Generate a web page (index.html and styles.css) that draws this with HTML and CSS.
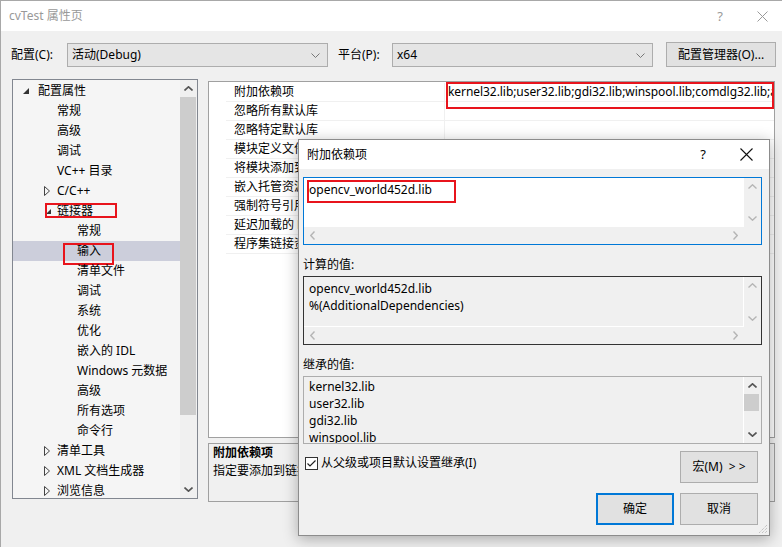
FILE: index.html
```html
<!DOCTYPE html>
<html lang="zh-CN">

<head>
    <meta charset="UTF-8">
    <meta name="viewport" content="width=device-width, initial-scale=1.0">
    <title>cvTest 属性页</title>
    <link rel="stylesheet" href="styles.css">
</head>

<body>
    <div class="window">
        <div class="titlebar">
            <span class="title">cvTest 属性页</span>
            <span class="cap-help">?</span>
            <svg class="cap-close" width="11" height="11" viewBox="0 0 11 11">
                <path d="M0.5 0.5 L10.5 10.5 M10.5 0.5 L0.5 10.5" stroke="#9a9a9a" stroke-width="1" fill="none" />
            </svg>
        </div>

        <div class="toolbar">
            <label class="tb-label">配置(C):</label>
            <div class="combo">
                <span>活动(Debug)</span>
                <svg width="9" height="5" viewBox="0 0 9 5"><path d="M0.5 0.5 L4.5 4.5 L8.5 0.5" stroke="#777" fill="none" /></svg>
            </div>
            <label class="tb-label plat">平台(P):</label>
            <div class="combo">
                <span>x64</span>
                <svg width="9" height="5" viewBox="0 0 9 5"><path d="M0.5 0.5 L4.5 4.5 L8.5 0.5" stroke="#777" fill="none" /></svg>
            </div>
            <button class="btn mgr">配置管理器(O)...</button>
        </div>

        <div class="main">
            <div class="tree">
                <ul class="nodes">
                    <li class="node l1"><span class="tw"><svg width="6" height="6" viewBox="0 0 6 6"><path d="M6 0 L6 6 L0 6 Z" fill="#333" /></svg></span>配置属性</li>
                    <li class="node l2">常规</li>
                    <li class="node l2">高级</li>
                    <li class="node l2">调试</li>
                    <li class="node l2">VC++ 目录</li>
                    <li class="node l2 has"><span class="tw"><svg width="6" height="10" viewBox="0 0 6 10"><path d="M0.5 0.5 L5.5 5 L0.5 9.5 Z" fill="none" stroke="#444" /></svg></span>C/C++</li>
                    <li class="node l2 has"><span class="tw"><svg class="open" width="5" height="5" viewBox="0 0 5 5"><path d="M5 0 L5 5 L0 5 Z" fill="#333" /></svg></span>链接器<span class="mark m-linker"></span></li>
                    <li class="node l3">常规</li>
                    <li class="node l3 sel">输入<span class="mark m-input"></span></li>
                    <li class="node l3">清单文件</li>
                    <li class="node l3">调试</li>
                    <li class="node l3">系统</li>
                    <li class="node l3">优化</li>
                    <li class="node l3">嵌入的 IDL</li>
                    <li class="node l3">Windows 元数据</li>
                    <li class="node l3">高级</li>
                    <li class="node l3">所有选项</li>
                    <li class="node l3">命令行</li>
                    <li class="node l2 has"><span class="tw"><svg width="6" height="10" viewBox="0 0 6 10"><path d="M0.5 0.5 L5.5 5 L0.5 9.5 Z" fill="none" stroke="#444" /></svg></span>清单工具</li>
                    <li class="node l2 has"><span class="tw"><svg width="6" height="10" viewBox="0 0 6 10"><path d="M0.5 0.5 L5.5 5 L0.5 9.5 Z" fill="none" stroke="#444" /></svg></span>XML 文档生成器</li>
                    <li class="node l2 has"><span class="tw"><svg width="6" height="10" viewBox="0 0 6 10"><path d="M0.5 0.5 L5.5 5 L0.5 9.5 Z" fill="none" stroke="#444" /></svg></span>浏览信息</li>
                </ul>
                <div class="tree-scroll">
                    <div class="sb-btn"><svg width="9" height="5" viewBox="0 0 9 5"><path d="M0.5 4.5 L4.5 0.8 L8.5 4.5" stroke="#555" stroke-width="1.6" fill="none" /></svg></div>
                    <div class="tree-thumb"></div>
                    <div class="sb-btn end"><svg width="9" height="5" viewBox="0 0 9 5"><path d="M0.5 0.5 L4.5 4.2 L8.5 0.5" stroke="#555" stroke-width="1.6" fill="none" /></svg></div>
                </div>
            </div>

            <div class="side">
                <div class="grid">
                    <div class="prop"><span class="pname">附加依赖项</span><span class="pval">kernel32.lib;user32.lib;gdi32.lib;winspool.lib;comdlg32.lib;advapi32.lib;shell32.lib</span><span class="mark m-value"></span></div>
                    <div class="prop"><span class="pname">忽略所有默认库</span><span class="pval"></span></div>
                    <div class="prop"><span class="pname">忽略特定默认库</span><span class="pval"></span></div>
                    <div class="prop"><span class="pname">模块定义文件</span><span class="pval"></span></div>
                    <div class="prop"><span class="pname">将模块添加到程序集</span><span class="pval"></span></div>
                    <div class="prop"><span class="pname">嵌入托管资源文件</span><span class="pval"></span></div>
                    <div class="prop"><span class="pname">强制符号引用</span><span class="pval"></span></div>
                    <div class="prop"><span class="pname">延迟加载的 DLL</span><span class="pval"></span></div>
                    <div class="prop"><span class="pname">程序集链接资源</span><span class="pval"></span></div>
                </div>
                <div class="desc">
                    <b>附加依赖项</b>
                    <p>指定要添加到链接命令行的附加项。[例如 kernel32.lib]</p>
                </div>
            </div>
        </div>
    </div>

    <!-- 弹出的编辑对话框 -->
    <div class="dialog">
        <div class="dlg-title">
            <span class="dlg-name">附加依赖项</span>
            <span class="dlg-help">?</span>
            <svg class="dlg-close" width="13" height="13" viewBox="0 0 13 13">
                <path d="M0.5 0.5 L12.5 12.5 M12.5 0.5 L0.5 12.5" stroke="#111" stroke-width="1.1" fill="none" />
            </svg>
        </div>
        <div class="dlg-body">
            <div class="edit focus">
                <div class="edit-text">opencv_world452d.lib<span class="mark m-lib"></span></div>
                <div class="vbar">
                    <div class="sb-btn"><svg width="9" height="5" viewBox="0 0 9 5"><path d="M0.5 4.5 L4.5 0.8 L8.5 4.5" stroke="#b5b5b5" stroke-width="1.4" fill="none" /></svg></div>
                    <div class="sb-btn"><svg width="9" height="5" viewBox="0 0 9 5"><path d="M0.5 0.5 L4.5 4.2 L8.5 0.5" stroke="#b5b5b5" stroke-width="1.4" fill="none" /></svg></div>
                </div>
                <div class="hbar">
                    <div class="sb-btn"><svg width="5" height="9" viewBox="0 0 5 9"><path d="M4.5 0.5 L0.8 4.5 L4.5 8.5" stroke="#b5b5b5" stroke-width="1.4" fill="none" /></svg></div>
                    <div class="sb-btn"><svg width="5" height="9" viewBox="0 0 5 9"><path d="M0.5 0.5 L4.2 4.5 L0.5 8.5" stroke="#b5b5b5" stroke-width="1.4" fill="none" /></svg></div>
                </div>
                <div class="corner"></div>
            </div>

            <div class="cap">计算的值:</div>
            <div class="edit ro dark">
                <div class="edit-text">opencv_world452d.lib<br>%(AdditionalDependencies)</div>
                <div class="vbar">
                    <div class="sb-btn"><svg width="9" height="5" viewBox="0 0 9 5"><path d="M0.5 4.5 L4.5 0.8 L8.5 4.5" stroke="#b5b5b5" stroke-width="1.4" fill="none" /></svg></div>
                    <div class="sb-btn"><svg width="9" height="5" viewBox="0 0 9 5"><path d="M0.5 0.5 L4.5 4.2 L8.5 0.5" stroke="#b5b5b5" stroke-width="1.4" fill="none" /></svg></div>
                </div>
                <div class="hbar">
                    <div class="sb-btn"><svg width="5" height="9" viewBox="0 0 5 9"><path d="M4.5 0.5 L0.8 4.5 L4.5 8.5" stroke="#b5b5b5" stroke-width="1.4" fill="none" /></svg></div>
                    <div class="sb-btn"><svg width="5" height="9" viewBox="0 0 5 9"><path d="M0.5 0.5 L4.2 4.5 L0.5 8.5" stroke="#b5b5b5" stroke-width="1.4" fill="none" /></svg></div>
                </div>
                <div class="corner"></div>
            </div>

            <div class="cap">继承的值:</div>
            <div class="edit ro list">
                <div class="edit-text">kernel32.lib<br>user32.lib<br>gdi32.lib<br>winspool.lib<br>comdlg32.lib</div>
                <div class="vbar">
                    <div class="sb-btn"><svg width="9" height="5" viewBox="0 0 9 5"><path d="M0.5 4.5 L4.5 0.8 L8.5 4.5" stroke="#555" stroke-width="1.6" fill="none" /></svg></div>
                    <div class="list-thumb"></div>
                    <div class="sb-btn end"><svg width="9" height="5" viewBox="0 0 9 5"><path d="M0.5 0.5 L4.5 4.2 L8.5 0.5" stroke="#555" stroke-width="1.6" fill="none" /></svg></div>
                </div>
            </div>

            <div class="dlg-row">
                <label class="check">
                    <svg width="13" height="13" viewBox="0 0 13 13">
                        <rect x="0.5" y="0.5" width="12" height="12" fill="#fff" stroke="#333" />
                        <path d="M2.5 6.5 L5 9 L10.5 3.5" stroke="#222" stroke-width="1.2" fill="none" />
                    </svg>
                    从父级或项目默认设置继承(I)
                </label>
                <button class="btn">宏(M)&nbsp; &gt; &gt;</button>
            </div>
            <div class="dlg-actions">
                <button class="btn ok">确定</button>
                <button class="btn">取消</button>
            </div>
        </div>
        <svg class="grip" width="10" height="10" viewBox="0 0 10 10">
            <path d="M9 1 L1 9 M9 4 L4 9 M9 7 L7 9" stroke="#b0b0b0" stroke-width="1" stroke-dasharray="1 1" fill="none" />
        </svg>
    </div>
</body>

</html>
```

FILE: styles.css
```css
* {
    margin: 0;
    padding: 0;
}

body {
    width: 782px;
    height: 547px;
    overflow: hidden;
    position: relative;
    background: #f0f0f0;
    color: #000;
    font-family: "Segoe UI", "Noto Sans", "Noto Sans CJK SC", sans-serif;
    font-size: 12px;
    line-height: 1;
}

ul {
    list-style: none;
}

.window {
    height: 546px;
    border-left: 1px solid #a8a8a8;
    border-top: 1px solid #a8a8a8;
}

.titlebar {
    height: 30px;
    background: #fff;
    display: flex;
    align-items: center;
    padding-left: 8px;
    color: #999;
}

.titlebar .title {
    flex: 1;
}

.cap-help {
    font-size: 13px;
    margin-right: 34px;
}

.cap-close {
    margin-right: 14px;
}

/* 配置 / 平台 那一行 */
.toolbar {
    height: 48px;
    box-sizing: border-box;
    padding: 12px 0 0 10px;
    display: flex;
    align-items: flex-start;
}

.tb-label {
    width: 56px;
    line-height: 24px;
}

.tb-label.plat {
    width: 54px;
    margin-left: 10px;
}

.combo {
    width: 261px;
    height: 24px;
    box-sizing: border-box;
    border: 1px solid #adadad;
    background: #e5e5e5;
    display: flex;
    align-items: center;
    justify-content: space-between;
    padding: 0 7px 0 4px;
}

.btn {
    font: inherit;
    color: #000;
    background: #e1e1e1;
    border: 1px solid #adadad;
    box-sizing: border-box;
    height: 32px;
    width: 78px;
}

.btn.mgr {
    width: 110px;
    height: 25px;
    margin: -1px 0 0 13px;
}

.main {
    display: flex;
    align-items: flex-start;
}

/* 左侧树 */
.tree {
    margin-left: 11px;
    width: 186px;
    height: 420px;
    box-sizing: border-box;
    border: 1px solid #828790;
    background: #f5f5f5;
    position: relative;
    overflow: hidden;
}

.nodes {
    padding-top: 1px;
}

.node {
    height: 20px;
    line-height: 20px;
    display: flex;
    align-items: center;
    white-space: nowrap;
    position: relative;
}

.node .tw {
    display: flex;
    align-items: center;
}

.l1 {
    padding-left: 10px;
}

.l1 .tw {
    width: 15px;
}

.l2 {
    padding-left: 44px;
}

.l2.has {
    padding-left: 31px;
}

.l2 .tw {
    width: 13px;
}

.l2 .tw .open {
    margin-left: 2px;
}

.l3 {
    padding-left: 64px;
}

.node.sel {
    background: #cccedb;
    margin-right: 17px;
}

.mark {
    position: absolute;
    box-sizing: border-box;
    border: 2px solid #e8141c;
}

.m-linker {
    left: 32px;
    top: 2px;
    width: 72px;
    height: 15px;
}

.m-input {
    left: 50px;
    top: 2px;
    width: 51px;
    height: 22px;
}

.tree-scroll {
    position: absolute;
    top: 0;
    right: 0;
    width: 17px;
    height: 100%;
    background: #f0f0f0;
    display: flex;
    flex-direction: column;
}

.sb-btn {
    height: 17px;
    flex: none;
    display: flex;
    align-items: center;
    justify-content: center;
}

.sb-btn.end {
    margin-top: auto;
}

.tree-thumb {
    height: 318px;
    background: #cdcdcd;
    margin: 0 1px 0 0;
}

/* 右侧属性表 */
.side {
    margin: 2px 0 0 10px;
    width: 567px;
}

.grid {
    height: 357px;
    box-sizing: border-box;
    border: 1px solid #a0a0a0;
    padding-top: 1px;
    background: #fff;
    overflow: hidden;
}

.prop {
    height: 19px;
    box-sizing: border-box;
    margin-left: 17px;
    border-bottom: 1px solid #f0f0f0;
    display: flex;
    position: relative;
}

.pname {
    width: 219px;
    padding-left: 8px;
    box-sizing: border-box;
    border-right: 1px solid #f0f0f0;
    line-height: 18px;
    white-space: nowrap;
}

.pval {
    flex: 1;
    padding-left: 3px;
    line-height: 18px;
    letter-spacing: -0.06px;
    white-space: nowrap;
    overflow: hidden;
}

.m-value {
    left: 220px;
    top: -1px;
    width: 328px;
    height: 27px;
}

.desc {
    margin-top: 5px;
    height: 59px;
    box-sizing: border-box;
    border: 1px solid #a0a0a0;
    padding-left: 4px;
    line-height: 18px;
}

/* 附加依赖项 对话框 */
.dialog {
    position: absolute;
    left: 298px;
    top: 139px;
    width: 472px;
    height: 397px;
    box-sizing: border-box;
    border: 1px solid #8c8c8c;
    background: #f0f0f0;
    box-shadow: 0 3px 14px rgba(0, 0, 0, 0.3);
}

.dlg-title {
    height: 29px;
    background: #fff;
    display: flex;
    align-items: center;
    padding-left: 8px;
}

.dlg-name {
    flex: 1;
}

.dlg-help {
    font-size: 13px;
    margin-right: 34px;
}

.dlg-close {
    margin-right: 16px;
}

.dlg-body {
    padding: 8px 7px 0 4px;
}

.edit {
    height: 68px;
    box-sizing: border-box;
    border: 1px solid #adadad;
    background: #f0f0f0;
    display: grid;
    grid-template-columns: 1fr 17px;
    grid-template-rows: 1fr 17px;
    overflow: hidden;
}

.edit.focus {
    border-color: #0078d7;
}

.edit.focus .edit-text {
    background: #fff;
}

.edit.dark {
    height: 69px;
    border-color: #333;
}

.edit.ro .edit-text {
    border-right: 1px solid #fff;
    border-bottom: 1px solid #fff;
}

.edit.list {
    grid-template-rows: 1fr;
}

.edit-text {
    position: relative;
    padding: 3px 5px 0;
    line-height: 17px;
    overflow: hidden;
    white-space: nowrap;
}

.edit.list .edit-text {
    padding-top: 1px;
    border-bottom: none;
}

.m-lib {
    left: 3px;
    top: 2px;
    width: 149px;
    height: 23px;
}

.vbar {
    display: flex;
    flex-direction: column;
    justify-content: space-between;
}

.edit.list .vbar {
    justify-content: flex-start;
}

.list-thumb {
    height: 17px;
    background: #cdcdcd;
    margin-right: 2px;
}

.hbar {
    display: flex;
    justify-content: space-between;
}

.hbar .sb-btn {
    width: 17px;
    height: auto;
}

.cap {
    margin-top: 11px;
    margin-bottom: 3px;
    line-height: 17px;
}

.dlg-row {
    margin-top: 7px;
    display: flex;
    justify-content: space-between;
    align-items: flex-start;
    padding-right: 4px;
}

.check {
    display: flex;
    align-items: center;
    gap: 3px;
    height: 22px;
    margin: 1px 0 0 2px;
}

.dlg-actions {
    margin-top: 10px;
    display: flex;
    justify-content: flex-end;
    gap: 6px;
    padding-right: 4px;
}

.btn.ok {
    border: 2px solid #0078d7;
}

.grip {
    position: absolute;
    right: 1px;
    bottom: 1px;
}
```
